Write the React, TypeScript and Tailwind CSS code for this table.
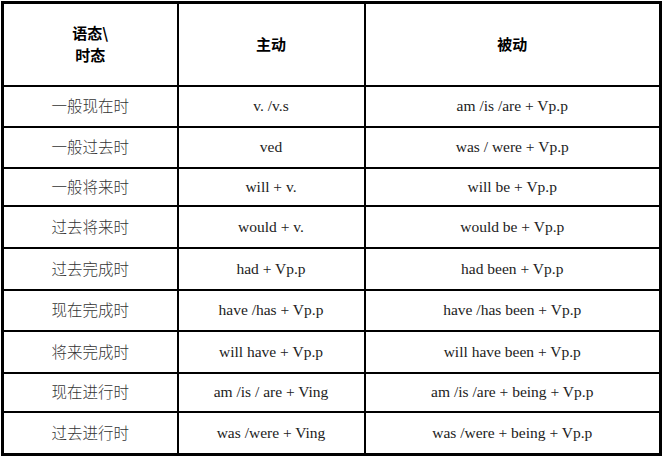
const rows: { tense: string; active: string; passive: string; h: string }[] = [
  { tense: '一般现在时', active: 'v. /v.s', passive: 'am /is /are + Vp.p', h: 'h-[41px]' },
  { tense: '一般过去时', active: 'ved', passive: 'was / were + Vp.p', h: 'h-[41px]' },
  { tense: '一般将来时', active: 'will + v.', passive: 'will be + Vp.p', h: 'h-[38px]' },
  { tense: '过去将来时', active: 'would + v.', passive: 'would be + Vp.p', h: 'h-[42px]' },
  { tense: '过去完成时', active: 'had + Vp.p', passive: 'had been + Vp.p', h: 'h-[42px]' },
  { tense: '现在完成时', active: 'have /has + Vp.p', passive: 'have /has been + Vp.p', h: 'h-[41px]' },
  { tense: '将来完成时', active: 'will have + Vp.p', passive: 'will have been + Vp.p', h: 'h-[42px]' },
  { tense: '现在进行时', active: 'am /is / are + Ving', passive: 'am /is /are + being + Vp.p', h: 'h-[39px]' },
  { tense: '过去进行时', active: 'was /were + Ving', passive: 'was /were + being + Vp.p', h: 'h-[43px]' },
];

const cjk = "font-['Noto_Sans_CJK_SC',sans-serif]";
const serif = "font-['Liberation_Serif','Noto_Sans_CJK_SC',serif]";

export default function App() {
  return (
    <div className="w-[664px] h-[458px] bg-white pt-[1px] pl-[1px]">
      <table className="w-[661px] table-fixed border-collapse border-[3px] border-black">
        <colgroup>
          <col className="w-[175px]" />
          <col className="w-[187px]" />
          <col />
        </colgroup>
        <thead>
          <tr className="h-[83px]">
            <th className={`border-[2px] border-black text-center align-middle text-[15px] leading-[22px] font-bold text-black ${cjk}`}>
              语态\<br />时态
            </th>
            <th className={`border-[2px] border-black text-center align-middle text-[15px] font-bold text-black ${cjk}`}>主动</th>
            <th className={`border-[2px] border-black text-center align-middle text-[15px] font-bold text-black ${cjk}`}>被动</th>
          </tr>
        </thead>
        <tbody>
          {rows.map((r) => (
            <tr key={r.tense} className={r.h}>
              <td className={`border-[2px] border-black text-center align-middle text-[15.5px] font-light text-[#333] ${cjk}`}>{r.tense}</td>
              <td className={`border-[2px] border-black text-center align-middle text-[15.5px] text-[#222] ${serif}`}>{r.active}</td>
              <td className={`border-[2px] border-black text-center align-middle text-[15.5px] text-[#222] ${serif}`}>{r.passive}</td>
            </tr>
          ))}
        </tbody>
      </table>
    </div>
  );
}
